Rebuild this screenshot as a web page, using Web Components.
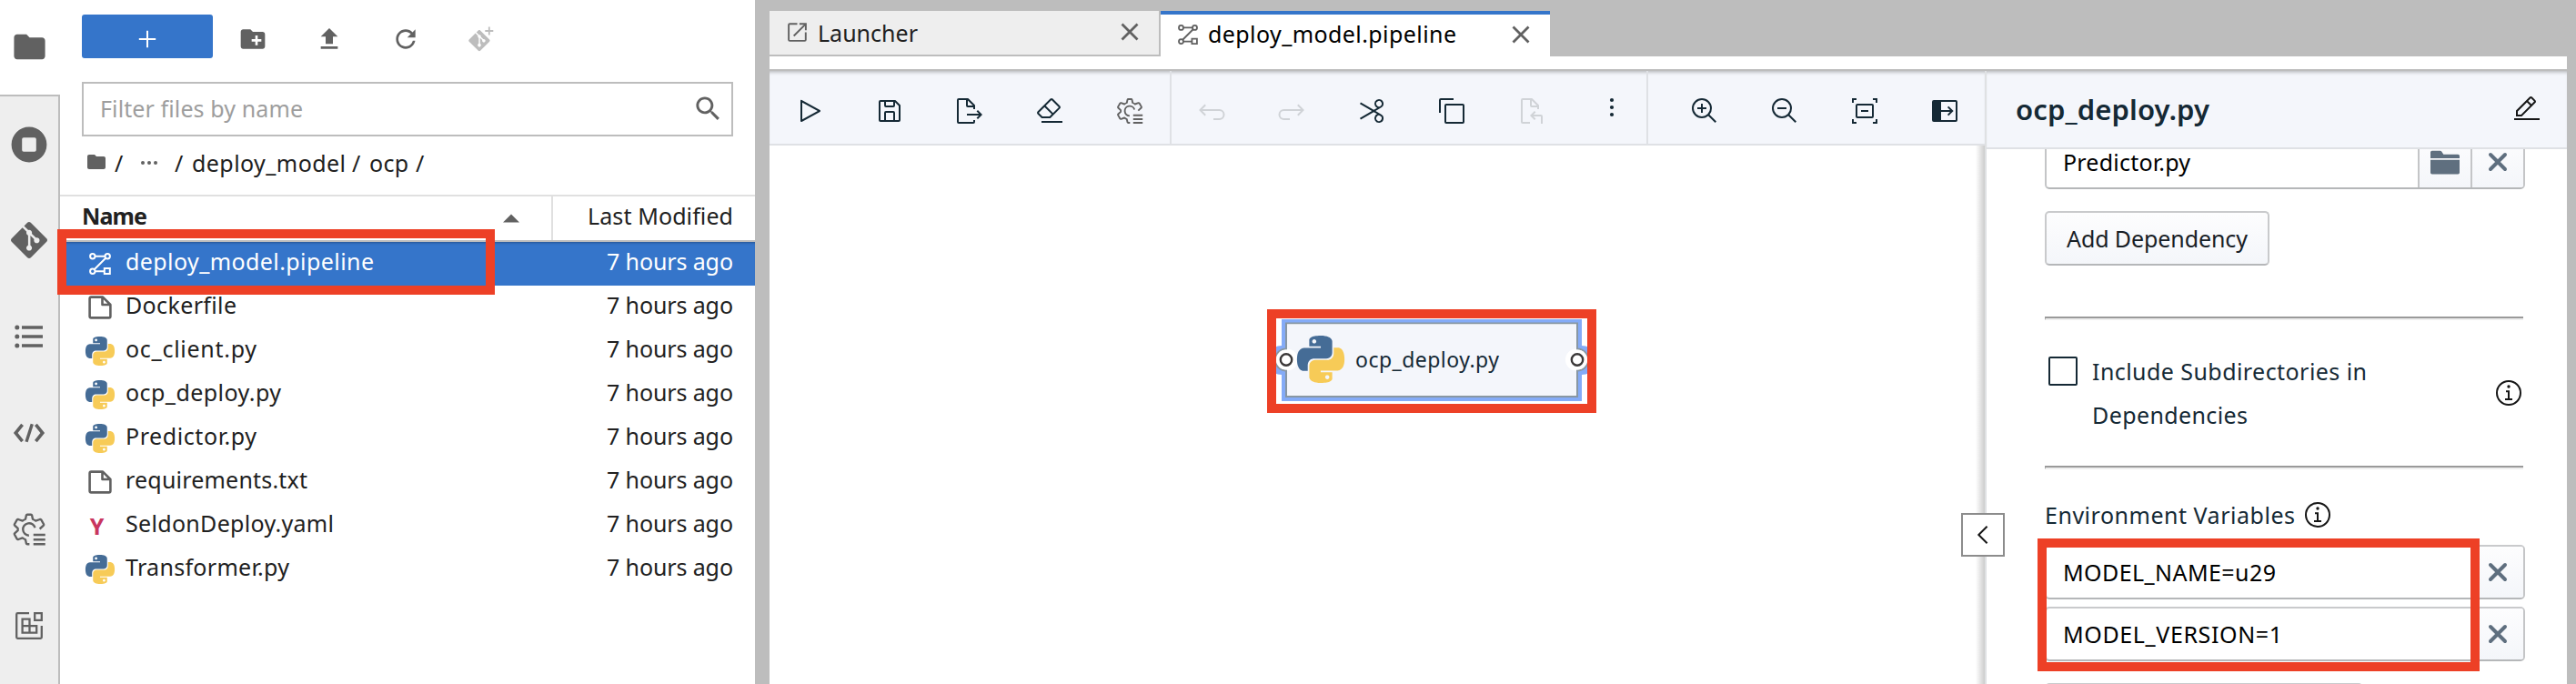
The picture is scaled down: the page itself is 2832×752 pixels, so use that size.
<!DOCTYPE html>
<html lang="en">
<head>
<meta charset="utf-8">
<title>JupyterLab - deploy_model.pipeline</title>
<style>
html,body{margin:0;height:100%}
body{font-family:"Noto Sans","Open Sans",sans-serif;font-size:25px;color:#212121;background:#bdbdbd;overflow:hidden}
</style>
</head>
<body>
<lab-app></lab-app>
<script>
const PY='M14.25.18l.9.2.73.26.59.3.45.32.34.34.25.34.16.33.1.3.04.26.02.2-.01.13V8.5l-.05.63-.13.55-.21.46-.26.38-.3.31-.33.25-.35.19-.35.14-.33.1-.3.07-.26.04-.21.02H8.77l-.69.05-.59.14-.5.22-.41.27-.33.32-.27.35-.2.36-.15.37-.1.35-.07.32-.04.27-.02.21v3.06H3.17l-.21-.03-.28-.07-.32-.12-.35-.18-.36-.26-.36-.36-.35-.46-.32-.59-.28-.73-.21-.88-.14-1.05-.05-1.23.06-1.22.16-1.04.24-.87.32-.71.36-.57.4-.44.42-.33.42-.24.4-.16.36-.1.32-.05.24-.01h.16l.06.01h8.16v-.83H6.18l-.01-2.75-.02-.37.05-.34.11-.31.17-.28.25-.26.31-.23.38-.2.44-.18.51-.15.58-.12.64-.1.71-.06.77-.04.84-.02 1.27.05zm-6.3 1.98l-.23.33-.08.41.08.41.23.34.33.22.41.09.41-.09.33-.22.23-.34.08-.41-.08-.41-.23-.33-.33-.22-.41-.09-.41.09z';
const GIT='M23.546 10.93L13.067.452c-.604-.603-1.582-.603-2.188 0L8.708 2.627l2.76 2.76c.645-.215 1.379-.07 1.889.441.516.515.658 1.258.438 1.9l2.658 2.66c.645-.223 1.387-.078 1.9.435.721.72.721 1.884 0 2.604-.719.719-1.881.719-2.6 0-.539-.541-.674-1.337-.404-1.996L12.86 8.955v6.525c.176.086.342.203.488.348.713.721.713 1.883 0 2.6-.719.721-1.889.721-2.609 0-.719-.719-.719-1.879 0-2.598.182-.18.387-.316.605-.406V8.835c-.217-.091-.424-.222-.6-.401-.545-.545-.676-1.342-.396-2.009L7.636 3.7.45 10.881c-.6.605-.6 1.584 0 2.189l10.48 10.477c.604.604 1.582.604 2.186 0l10.43-10.43c.605-.603.605-1.582 0-2.187';
const s=(d,w=2,x='')=>`<path fill="none" stroke="currentColor" stroke-width="${w}" ${x} d="${d}"/>`;
const p=d=>`<path fill-rule="evenodd" d="${d}"/>`;
const ICONS={
 folder:[24,p('M10 4H4c-1.1 0-1.99.9-1.99 2L2 18c0 1.1.9 2 2 2h16c1.1 0 2-.9 2-2V8c0-1.1-.9-2-2-2h-8l-2-2z')],
 newfolder:[24,p('M20 6h-8l-2-2H4c-1.11 0-1.99.89-1.99 2L2 18c0 1.11.89 2 2 2h16c1.11 0 2-.89 2-2V8c0-1.11-.89-2-2-2zm-1 8h-3v3h-2v-3h-3v-2h3V9h2v3h3v2z')],
 upload:[24,p('M9 16h6v-6h4l-7-7-7 7h4zm-4 2h14v2H5z')],
 refresh:[18,p('M9 13.5c-2.49 0-4.5-2.01-4.5-4.5S6.51 4.5 9 4.5c1.24 0 2.36.52 3.17 1.33L10 8h5V3l-1.76 1.76C12.15 3.68 10.66 3 9 3 5.69 3 3.01 5.69 3.01 9S5.69 15 9 15c2.97 0 5.43-2.16 5.9-5h-1.52c-.46 2-2.24 3.5-4.38 3.5z')],
 search:[24,p('M15.5 14h-.79l-.28-.27C15.41 12.59 16 11.11 16 9.5 16 5.91 13.09 3 9.5 3S3 5.91 3 9.5 5.91 16 9.5 16c1.61 0 3.09-.59 4.23-1.57l.27.28v.79l5 4.99L20.49 19l-4.99-5zm-6 0C7.01 14 5 11.99 5 9.5S7.01 5 9.5 5 14 7.01 14 9.5 11.99 14 9.5 14z')],
 git:[24,p(GIT)],
 gitclone:[28,`<g transform="translate(.3 4) scale(.97)">${p(GIT)}</g>`+s('M22.8 .5v9M18.3 5h9',1.8)],
 plus:[20,s('M10 .8v18.4M.8 10h18.4',2)],
 stop:[40,p('M20 .6a19.4 19.4 0 1 0 0 38.8a19.4 19.4 0 1 0 0-38.8zM14 12.2h12a1.8 1.8 0 0 1 1.8 1.8v12a1.8 1.8 0 0 1-1.8 1.8H14a1.8 1.8 0 0 1-1.8-1.8V14a1.8 1.8 0 0 1 1.8-1.8z')],
 list:[40,s('M12 10h23M12 20h23M12 30h23',3.5)+'<circle cx="6.800" cy="10" r="2.5"/><circle cx="6.800" cy="20" r="2.5"/><circle cx="6.800" cy="30" r="2.5"/>'],
 code:[40,s('M12.6 10.8L5.2 20L12.6 29.2M27.4 10.8L34.8 20L27.4 29.2',3.6)+s('M23.3 10.3L17 29.7',3.4)],
 gear:[32,s('M25.3 15.6L28.7 12.5Q29.2 12 28.8 11.4L26.6 7.5Q26.2 7 25.5 7.2L21.8 8.5Q20.6 7.6 19.2 7L18.5 3.7Q18.3 3 17.6 3H14.4Q13.7 3 13.5 3.7L12.8 7Q11.4 7.6 10.2 8.5L6.5 7.2Q5.8 7 5.4 7.5L3.2 11.4Q2.8 12 3.3 12.5L6.1 15.1V16.9L3.3 19.5Q2.8 20 3.2 20.6L5.4 24.5Q5.8 25 6.5 24.8L10.2 23.5Q11.4 24.4 12.8 25L13.5 28.3Q13.7 29 14.4 29H16.3M21.2 14.6A5.4 5.4 0 1 0 15.9 21.4',1.9,'stroke-linejoin="round"')+s('M19.8 20.8H30.2M19.8 24.9H30.2M19.8 29H30.2',2)],
 extension:[40,s('M20 6.2H7.4Q6.2 6.2 6.2 7.4V32.6Q6.2 33.8 7.4 33.8H32.6Q33.8 33.8 33.8 32.6V20M26.2 6.2H33.8V13.8H26.2ZM12.6 12.6H20.5V27.6H12.6ZM12.6 20.2H28.2V27.6H20',2.3)],
 pipeline:[24,s('M6.3 3.7H17.5M17.9 6L5.9 18M6.3 20.3H16.5',2)+'<g fill="none" stroke="currentColor" stroke-width="2"><circle cx="3.8" cy="3.7" r="2.7"/><circle cx="20.2" cy="3.7" r="2.7"/><circle cx="3.8" cy="20.3" r="2.7"/><path d="M16.8 17h6v6h-6z"/></g>'],
 file:[26,s('M1.6 3.2Q1.6 1.6 3.2 1.6H16L24.4 10V22.8Q24.4 24.4 22.8 24.4H3.2Q1.6 24.4 1.6 22.8ZM15.5 1.8V10H24',2.6,'stroke-linejoin="round"')],
 python:[24,`<path fill="#456c96" d="${PY}"/><path fill="#f7cb57" transform="rotate(180 12 12)" d="${PY}"/>`],
 dots:[20,'<circle cx="3" cy="10" r="2"/><circle cx="10" cy="10" r="2"/><circle cx="17" cy="10" r="2"/>'],
 launch:[24,s('M12 2.3H3.5Q2.2 2.3 2.2 3.5V20.6Q2.2 21.8 3.5 21.8H20.5Q21.7 21.8 21.7 20.6V12M8 16.2L21.2 3',2)+p('M14.5 1.3H22.8V9.6H20.8V3.3H14.5Z')],
 close:[20,s('M1.5 1.5L18.5 18.5M18.5 1.5L1.5 18.5',2.8)],
 cross:[22,s('M3 3L19 19M19 3L3 19',4,'stroke-linecap="round"')],
 play:[32,p('M7,28a1,1,0,0,1-1-1V5a1,1,0,0,1,1.4819-.8763l20,11a1,1,0,0,1,0,1.7525l-20,11A1.0005,1.0005,0,0,1,7,28ZM8,6.6909V25.3088L24.9248,16Z')],
 save:[32,p('M27.71,9.29l-5-5A1,1,0,0,0,22,4H6A2,2,0,0,0,4,6V26a2,2,0,0,0,2,2H26a2,2,0,0,0,2-2V10A1,1,0,0,0,27.71,9.29ZM12,6h8v4H12Zm8,20H12V18h8Zm2,0V18a2,2,0,0,0-2-2H12a2,2,0,0,0-2,2v8H6V6h4v4a2,2,0,0,0,2,2h8a2,2,0,0,0,2-2V6.41l4,4V26Z')],
 export:[32,p('M13 21H26.17L23.59 23.59 25 25 30 20 25 15 23.59 16.41 26.17 19H13Z')+p('M22,14V10a1,1,0,0,0-.29-.71l-7-7A1,1,0,0,0,14,2H4A2,2,0,0,0,2,4V28a2,2,0,0,0,2,2H20a2,2,0,0,0,2-2V26H20v2H4V4h8v6a2,2,0,0,0,2,2h6v2Zm-8-4V4.41L19.59,10Z')],
 erase:[32,p('M7 27H30V29H7Z')+p('M27.38,10.51,19.45,2.59a2,2,0,0,0-2.83,0l-14,14a2,2,0,0,0,0,2.83L7.13,24h9.59L27.38,13.34A2,2,0,0,0,27.38,10.51ZM15.89,22H8L4,18l6.31-6.31,7.93,7.92Zm3.76-3.76-7.92-7.93L18,4,26,11.93Z')],
 undo:[32,s('M3.5 15H24.5a5 5 0 0 1 0 10H18M9.2 9.3L3.5 15L9.2 20.7')],
 redo:[32,s('M28.5 15H7.5a5 5 0 0 0 0 10H14M22.8 9.3L28.5 15L22.8 20.7')],
 cut:[32,p('M26.5,19.63,20.24,16l6.26-3.63a5,5,0,0,0-1.21-9.2A5.19,5.19,0,0,0,24,3a5,5,0,0,0-4.33,7.53,5,5,0,0,0,2.39,2.1l-3.82,2.21L4,6.6,3,8.34,16.24,16,3,23.68l1,1.74,14.24-8.26,3.82,2.21a5,5,0,0,0-2.39,2.1A5,5,0,0,0,24,29a5.19,5.19,0,0,0,1.29-.17,5,5,0,0,0,1.21-9.2ZM21.4,9.53a3,3,0,0,1,1.1-4.12,3,3,0,0,1,4.1,1.11,3,3,0,0,1-1.1,4.11h0A3,3,0,0,1,21.4,9.53Zm5.2,16a3,3,0,0,1-4.1,1.11,3,3,0,0,1-1.1-4.12,3,3,0,0,1,4.1-1.1h0A3,3,0,0,1,26.6,25.48Z')],
 copy:[32,p('M28,10V28H10V10H28m0-2H10a2,2,0,0,0-2,2V28a2,2,0,0,0,2,2H28a2,2,0,0,0,2-2V10a2,2,0,0,0-2-2Z')+p('M4,18H2V4A2,2,0,0,1,4,2H18V4H4Z')],
 paste:[32,p('M26 20H17.83l2.58-2.59L19 16 14 21l5 5 1.41-1.41L17.83 22H26v8h2V22A2 2 0 0026 20Z')+p('M23.71 9.29l-7-7A1 1 0 0016 2H6A2 2 0 004 4V28a2 2 0 002 2h8V28H6V4h8v6a2 2 0 002 2h6v2h2V10A1 1 0 0023.71 9.29zM16 10V4.41L21.59 10z')],
 more:[32,'<circle cx="16" cy="4" r="2.1"/><circle cx="16" cy="12" r="2.1"/><circle cx="16" cy="20" r="2.1"/>'],
 zoomin:[32,p('M18 12H14V8H12V12H8V14H12V18H14V14H18Z')+p('M21.4479,20A10.856,10.856,0,0,0,24,13,11,11,0,1,0,13,24a10.856,10.856,0,0,0,7-2.5521L27.5859,29,29,27.5859ZM13,22a9,9,0,1,1,9-9A9.01,9.01,0,0,1,13,22Z')],
 zoomout:[32,p('M8 12H18V14H8Z')+p('M21.4479,20A10.856,10.856,0,0,0,24,13,11,11,0,1,0,13,24a10.856,10.856,0,0,0,7-2.5521L27.5859,29,29,27.5859ZM13,22a9,9,0,1,1,9-9A9.01,9.01,0,0,1,13,22Z')],
 fit:[32,s('M7 3H3V7M25 3H29V7M7 29H3V25M25 29H29V25M12 16H20')+'<rect x="7" y="9" width="18" height="14" rx="1" fill="none" stroke="currentColor" stroke-width="2"/>'],
 panel:[32,'<rect x="3" y="5" width="26" height="22" rx="1" fill="none" stroke="currentColor" stroke-width="2"/>'+p('M3 5H12V27H3Z')+s('M12 16H24M19.6 11.4L24.2 16L19.6 20.6')],
 edit:[32,p('M2 26H30V28H2Z')+p('M25.4,9c.8-.8.8-2,0-2.8l-3.6-3.6c-.8-.8-2-.8-2.8,0l-15,15V24h6.4L25.4,9z M20.4,4L24,7.6l-3,3L17.4,7L20.4,4z M6,22v-3.6l10-10l3.6,3.6l-10,10H6z')],
 bpfolder:[32,p('M0 2.5Q0 .8 1.7 .8H10.5Q11.7 .8 12.4 1.8L14.3 4.8H30.3Q32 4.8 32 6.5V9H0ZM0 10.8H32V24.8Q32 26.6 30.3 26.6H1.7Q0 26.6 0 24.8Z')],
 info:[28,'<circle cx="14" cy="14" r="13" fill="none" stroke="currentColor" stroke-width="2"/><circle cx="14" cy="7" r="1.7"/>'+p('M15 19.9V11.2H11V13.2H13V19.9H10V21.9H18V19.9Z')],
 chevron:[20,s('M14.6 .8L5.3 10L14.6 19.2',2)],
 caret:[18,p('M0 13.6L9 4.6L18 13.6Z')]
};
const define=(name,css,html)=>customElements.define(name,class extends HTMLElement{
  connectedCallback(){
    if(this.shadowRoot)return;
    const t=document.createElement('template');
    t.innerHTML=`<style>${css}</style>${typeof html==='function'?html(this):html}`;
    this.attachShadow({mode:'open'}).append(t.content.cloneNode(true));
  }
});

define('ui-icon',':host{display:block;flex:none}svg{display:block;fill:currentColor;overflow:visible}',el=>{
  const [box,body]=ICONS[el.getAttribute('name')],z=el.getAttribute('size')||box;
  return `<svg width="${z}" height="${z}" viewBox="0 0 ${box} ${box}">${body}</svg>`;
});

/* A one-line label whose tracking is set so that it takes the width given in "w". */
const pen=document.createElement('canvas').getContext('2d');
define('ui-label',':host{display:block;flex:none;white-space:pre}',el=>{
  const size=+(el.getAttribute('size')||25),weight=el.getAttribute('weight')||400,text=el.textContent,w=+el.getAttribute('w');
  pen.font=`${weight} ${size}px "Noto Sans"`;
  const gap=text.length>1?(w-pen.measureText(text).width)/(text.length-1):0;
  return `<style>:host{font-size:${size}px;font-weight:${weight};letter-spacing:${gap.toFixed(3)}px;width:${w}px;line-height:${Math.round(size*1.4)}px}</style><slot></slot>`;
});

define('ui-highlight',':host{position:absolute;box-sizing:border-box;border:10px solid #ed4026;pointer-events:none;z-index:5}','');

define('side-bar',`
:host{display:flex;flex-direction:column;width:66px;flex:none;color:#616161}
.tab{box-sizing:border-box;height:106px;flex:none;display:flex;align-items:center;justify-content:center;padding-right:2px}
.tab.active{height:104px;padding-bottom:2px;background:#fff}
.rest{flex:1;background:#eee;border-top:2px solid #bdbdbd;border-right:2px solid #bdbdbd}
.rest .tab{padding-right:0}.rest .tab:first-child{height:105px}`,`
<div class="tab active"><ui-icon name="folder" size="41"></ui-icon></div>
<div class="rest">${['stop','git','list','code','gear','extension'].map(n=>`<div class="tab"><ui-icon name="${n}" size="40"></ui-icon></div>`).join('')}</div>`);

define('file-row',`
:host{display:flex;align-items:center;height:48px;padding:0 24px 0 24px;box-sizing:border-box}
:host([selected]){background:#3575ca;color:#fff;box-shadow:inset 0 3px 3px -2px rgba(0,0,0,.3)}
.i{width:40px;display:flex;justify-content:center;color:#616161;margin-right:8px}
:host([selected]) .i{color:#fff}
.y{color:#c9365f;font-weight:700;font-size:25px;line-height:30px;padding:0 7px 0 0}
.n{flex:1;padding-bottom:5px}.t{padding-bottom:5px}`,el=>{
 const i=el.getAttribute('icon'),z={python:32,file:26,pipeline:24}[i];
 return `<div class="i">${i==='yaml'?'<span class="y">Y</span>':`<ui-icon name="${i}" size="${z}"></ui-icon>`}</div>
 <div class="n"><ui-label w="${el.getAttribute('w')}">${el.getAttribute('name')}</ui-label></div><div class="t"><ui-label w="139">7 hours ago</ui-label></div>`;
});

define('file-browser',`
:host{display:flex;flex-direction:column;width:764px;flex:none;background:#fff}
.tools{display:flex;align-items:center;height:48px;padding:16px 24px 0;color:#616161}
.new{width:144px;height:48px;border-radius:3px;background:#3575ca;color:#fff;display:flex;align-items:center;justify-content:center;padding-top:6px;box-sizing:border-box;margin-right:28px}
.tools .t{width:32px;margin-right:52px;padding-top:5px;flex:none}.tools .t.g{color:#bdbdbd;margin-left:1px}
.filter{margin:26px 24px 0;height:60px;box-sizing:border-box;border:2px solid #bdbdbd;display:flex;align-items:center;justify-content:space-between;padding:0 8px 1px 18px;color:#9e9e9e}
.filter ui-icon{color:#616161;margin-top:-1px}
.crumbs{display:flex;align-items:center;height:60px;padding:0 0 4px 28px;box-sizing:border-box}
.crumbs ui-icon{color:#616161}.crumbs ui-label{margin-top:2px}
.head{display:flex;height:52px;box-sizing:border-box;border-top:2px solid #e0e0e0;border-bottom:2px solid #bdbdbd;margin-top:4px}
.head .a{flex:1;display:flex;align-items:center;justify-content:space-between;padding:0 35px 2px 24px;border-right:2px solid #e0e0e0}
.head .a ui-icon{color:#616161;margin-top:2px}.head .a ui-label{margin-bottom:3px}
.head .b{width:222px;box-sizing:border-box;padding:4px 0 0 38px}
`,`
<div class="tools"><div class="new"><ui-icon name="plus" size="20"></ui-icon></div>
<div class="t"><ui-icon name="newfolder" size="32"></ui-icon></div><div class="t"><ui-icon name="upload" size="32"></ui-icon></div><div class="t"><ui-icon name="refresh" size="32"></ui-icon></div><div class="t g"><ui-icon name="gitclone" size="28"></ui-icon></div></div>
<div class="filter"><ui-label w="223">Filter files by name</ui-label><ui-icon name="search" size="35"></ui-icon></div>
<div class="crumbs"><ui-icon name="folder" size="24" style="margin-right:8px"></ui-icon><ui-label w="10">/</ui-label><ui-icon name="dots" size="20" style="margin:2px 18px 0 18px"></ui-icon><ui-label w="10">/</ui-label><ui-label w="169" style="margin-left:9px">deploy_model</ui-label><ui-label w="10" style="margin-left:7px">/</ui-label><ui-label w="43" style="margin-left:9px">ocp</ui-label><ui-label w="10" style="margin-left:8px">/</ui-label></div>
<div class="head"><div class="a"><ui-label w="72" weight="700">Name</ui-label><ui-icon name="caret"></ui-icon></div><div class="b"><ui-label w="160">Last Modified</ui-label></div></div>
<file-row selected icon="pipeline" name="deploy_model.pipeline" w="273"></file-row>
<file-row icon="file" name="Dockerfile" w="122"></file-row>
<file-row icon="python" name="oc_client.py" w="144"></file-row>
<file-row icon="python" name="ocp_deploy.py" w="171"></file-row>
<file-row icon="python" name="Predictor.py" w="144"></file-row>
<file-row icon="file" name="requirements.txt" w="200"></file-row>
<file-row icon="yaml" name="SeldonDeploy.yaml" w="229"></file-row>
<file-row icon="python" name="Transformer.py" w="180"></file-row>`);

define('tab-bar',`
:host{display:flex;height:50px;padding-top:12px;background:#bdbdbd}
.tab{display:flex;align-items:center;box-sizing:border-box;width:430px;padding:0 22px 2px 19px;background:#eee;border-right:2px solid #bdbdbd;border-bottom:2px solid #bdbdbd;color:#616161}
.tab.on{width:428px;background:#fff;border:0;border-top:4px solid #3575ca;padding:0 22px 0 19px}
ui-label{margin-left:11px;color:#212121;margin-top:3px}.on ui-label{color:#000;margin-top:0;margin-bottom:3px}
.x{margin-left:auto}.on ui-icon{margin-bottom:2px}`,`
<div class="tab"><ui-icon name="launch" size="23"></ui-icon><ui-label w="110">Launcher</ui-label><ui-icon class="x" name="close" size="20"></ui-icon></div>
<div class="tab on"><ui-icon name="pipeline" size="22"></ui-icon><ui-label w="273">deploy_model.pipeline</ui-label><ui-icon class="x" name="close" size="20"></ui-icon></div>`);

const group=a=>a.map(n=>`<ui-icon name="${n}" size="32"${/undo|redo|paste/.test(n)?' class="off"':n==='gear'?' class="grey"':''}></ui-icon>`).join('');
define('pipeline-toolbar',`
:host{display:flex;height:82px;box-sizing:border-box;background:#f4f6fb;border-bottom:2px solid #dfe1e5;color:#152935;box-shadow:inset 0 4px 4px -3px rgba(0,0,0,.3)}
div{display:flex;gap:56px;padding:28px 28px 0;border-right:2px solid #dfe1e5}
div:nth-of-type(2){padding-right:22px}div:nth-of-type(3){padding-left:46px;border:0}
.off{color:#d0d3d7}.grey{color:#616161}`,`
<div>${group(['play','save','export','erase','gear'])}</div><div>${group(['undo','redo','cut','copy','paste','more'])}</div><div>${group(['zoomin','zoomout','fit','panel'])}</div>`);

define('pipeline-node',`
:host{display:block;position:absolute;width:346px;height:90px;color:#152935}
svg{display:block}
.c{position:absolute;left:25px;top:18px;display:flex;align-items:center;gap:12px}
ui-label{margin-bottom:1px}`,`
<svg width="346" height="90" viewBox="0 0 346 90" fill="none">
<path fill="#84abf7" d="M8 0H338V29A16 16 0 0 1 338 61V90H8V61A16 16 0 0 1 8 29Z"/>
<path fill="#fff" stroke="#8897a3" stroke-width="2" d="M13 4.500H333V32.500A12 12 0 0 1 333 56.500V85H13V56.500A12 12 0 0 1 13 32.500Z"/>
<path fill="#f4f6fb" d="M14 5.500H332V32.500A12 12 0 0 0 332 56.500V84H14V56.500A12 12 0 0 0 14 32.500Z"/>
<circle cx="13" cy="44.500" r="11" fill="#fff"/><circle cx="333" cy="44.500" r="11" fill="#fff"/>
<circle cx="13" cy="44.500" r="6.200" fill="#fff" stroke="#3b3838" stroke-width="2.400"/><circle cx="333" cy="44.500" r="6.200" fill="#fff" stroke="#3b3838" stroke-width="2.400"/>
</svg><div class="c"><ui-icon name="python" size="52"></ui-icon><ui-label size="23" w="158">ocp_deploy.py</ui-label></div>`);

define('pipeline-canvas',':host{display:block;flex:1;position:relative;background:#fff}pipeline-node{left:555px;top:191px}ui-highlight{left:547px;top:180px;width:362px;height:114px}',
'<pipeline-node></pipeline-node><ui-highlight></ui-highlight>');

define('list-field',`
:host{display:flex;box-sizing:border-box;height:60px;border:2px solid #bfc0c2;border-color:#c9cacc #c4c5c7 #b5b7b9;border-radius:5px;overflow:hidden;background:#fff;color:#000}
.v{flex:1;display:flex;align-items:center;padding-left:18px}
.b{box-sizing:border-box;width:58px;border-left:2px solid #c4c5c7;display:flex;align-items:center;justify-content:center;color:#5f6f7f;background:linear-gradient(#fdfdfe,#f4f6fa)}`,el=>`
<div class="v"><slot></slot></div>${el.hasAttribute('browse')?'<div class="b"><ui-icon name="bpfolder" size="32" style="height:26px"></ui-icon></div>':''}<div class="b"><ui-icon name="cross" size="22"></ui-icon></div>`);

define('properties-panel',`
:host{display:flex;flex-direction:column;width:638px;flex:none;border-left:2px solid #dfe1e3;background:#fff;position:relative;z-index:2;color:#152935}
header{display:flex;height:86px;box-sizing:border-box;border-bottom:2px solid #dfe1e5;background:#f4f6fb;justify-content:space-between;padding:20px 28px 0 32px;box-shadow:inset 0 4px 4px -3px rgba(0,0,0,.3)}
header ui-icon{margin-top:6px;color:#161616}header ui-label{margin-top:1px}
.body{flex:1;min-height:0;overflow:hidden;padding:0 46px 0 64px}
.btn{box-sizing:border-box;width:247px;height:60px;border:2px solid #c9cacc;border-bottom-color:#b5b7b9;border-radius:5px;background:linear-gradient(#fdfdfe,#f4f6fa);display:flex;align-items:center;justify-content:center;margin-top:24px;color:#182026}
.hr{height:4px;box-sizing:border-box;border-top:2px solid #9a9a9a;border-left:1px solid #9a9a9a;border-bottom:2px solid #eee;width:526px}
.check{display:flex;height:160px;align-items:center;padding-right:4px}
.box{box-sizing:border-box;width:32px;height:32px;border:2px solid #152935;border-radius:2px;margin:-48px 16px 0 4px}
.check .t{flex:1}
.tall{display:flex;height:48px;align-items:center}
ui-icon.i{color:#161616}
.env{display:flex;align-items:center;gap:11px;height:28px;margin:36px 0 19px}
.toggle{position:absolute;box-sizing:border-box;left:-28px;top:486px;width:48px;height:48px;border:2px solid #8c8c8c;background:#fff;display:flex;align-items:center;justify-content:center;color:#161616}
.shade{position:absolute;left:-12px;top:82px;bottom:0;width:10px;background:linear-gradient(to right,rgba(0,0,0,0),rgba(0,0,0,.2))}
ui-highlight{left:56px;top:514px;width:486px;height:146px}`,`
<div class="shade"></div>
<header><ui-label size="31" weight="600" w="213">ocp_deploy.py</ui-label><ui-icon name="edit" size="32"></ui-icon></header>
<div class="body">
<list-field browse style="margin-top:-16px"><ui-label w="140">Predictor.py</ui-label></list-field>
<div class="btn"><ui-label w="199">Add Dependency</ui-label></div>
<div class="hr" style="margin-top:56px"></div>
<div class="check"><div class="box"></div><div class="t"><div class="tall"><ui-label w="302">Include Subdirectories in</ui-label></div><div class="tall"><ui-label w="171">Dependencies</ui-label></div></div><ui-icon class="i" name="info"></ui-icon></div>
<div class="hr"></div>
<div class="env"><ui-label w="275">Environment Variables</ui-label><ui-icon class="i" name="info"></ui-icon></div>
<list-field><ui-label w="234">MODEL_NAME=u29</ui-label></list-field>
<list-field style="margin-top:8px"><ui-label w="241">MODEL_VERSION=1</ui-label></list-field>
<div class="btn" style="width:350px"></div>
</div>
<div class="toggle"><ui-icon name="chevron"></ui-icon></div><ui-highlight></ui-highlight>`);

define('pipeline-editor',`
:host{display:flex;flex:1;min-height:0}
.main{flex:1;display:flex;flex-direction:column;min-width:0}`,
'<div class="main"><pipeline-toolbar></pipeline-toolbar><pipeline-canvas></pipeline-canvas></div><properties-panel></properties-panel>');

define('lab-app',`
:host{display:flex;position:relative;width:2832px;height:752px;background:#fff;overflow:hidden}
main{flex:1;min-width:0;display:flex;flex-direction:column;border-left:16px solid #bdbdbd}
.strip{height:14px;flex:none;margin-right:10px;background:#fff;border-bottom:2px solid #bdbdbd}
.work{flex:1;min-height:0;display:flex;border-right:10px solid #bdbdbd}
.under{background:#bdbdbd;flex:none}
ui-highlight{left:63px;top:252px;width:481px;height:72px}`,`
<side-bar></side-bar><file-browser></file-browser>
<main><tab-bar></tab-bar><div class="under"><div class="strip"></div></div><div class="work"><pipeline-editor></pipeline-editor></div></main>
<ui-highlight></ui-highlight>`);
</script>
</body>
</html>
